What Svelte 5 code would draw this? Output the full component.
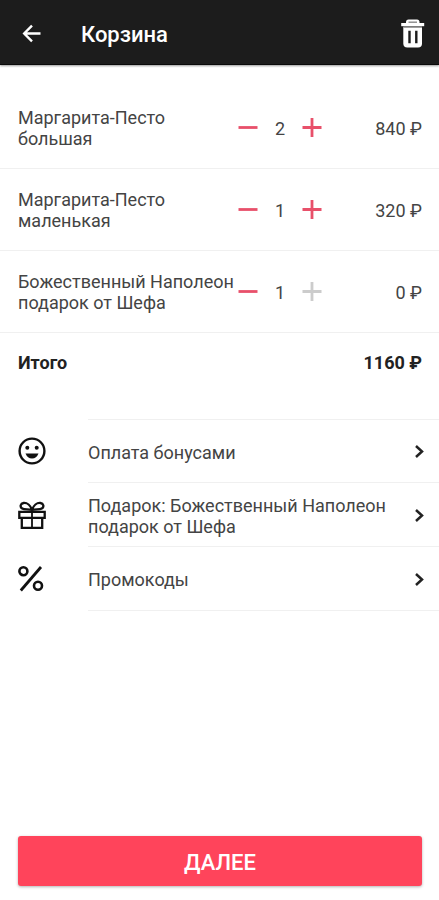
<script lang="ts">
  interface CartItem {
    name: string;
    count: number;
    price: number;
    gift: boolean;
  }

  interface Option {
    icon: string;
    label: string;
  }

  let items: CartItem[] = [
    { name: 'Маргарита-Песто большая', count: 2, price: 420, gift: false },
    { name: 'Маргарита-Песто маленькая', count: 1, price: 320, gift: false },
    {
      name: 'Божественный Наполеон подарок от Шефа',
      count: 1,
      price: 0,
      gift: true,
    },
  ];

  const options: Option[] = [
    { icon: 'smile', label: 'Оплата бонусами' },
    { icon: 'gift', label: 'Подарок: Божественный Наполеон подарок от Шефа' },
    { icon: 'percent', label: 'Промокоды' },
  ];

  $: total = items.reduce((sum, item) => sum + item.count * item.price, 0);

  const changeCount = (i: number, delta: number) => {
    items[i].count += delta;
    items = items.filter((item) => item.count > 0);
  };

  const clearCart = () => {
    items = [];
  };
</script>

<div class="screen">
  <header>
    <button aria-label="Назад">
      <svg width="28" height="28" viewBox="0 0 28 28">
        <path
          d="M22.5 13.5H6.5M14 5.7L6.2 13.5l7.8 7.8"
          fill="none"
          stroke="#fff"
          stroke-width="2.4"
        />
      </svg>
    </button>
    <h1>Корзина</h1>
    <button aria-label="Очистить корзину" on:click={clearCart}>
      <svg width="28" height="32" viewBox="0 0 28 32">
        <path d="M4.3 9H23V25.5Q23 29.5 19 29.5H8.3Q4.300 29.5 4.3 25.5Z" fill="#fff" />
        <path d="M7 5V4Q7 1.500 9.5 1.5H18Q20.500 1.5 20.5 4V5Z" fill="#fff" />
        <path d="M9.500 4.2H18" stroke="#888" stroke-width="1.4" />
        <path d="M2.2 5H25.200V8.2H2.2Z" fill="#fff" />
        <path d="M4.3 9H23" stroke="#888" stroke-width="1.6" />
        <path
          d="M10.5 12.800V25.2M17.3 12.8V25.2"
          stroke="#1c1c1c"
          stroke-width="2.4"
        />
      </svg>
    </button>
  </header>

  <main>
    <ul class="items">
      {#each items as item, i}
        <li class="item">
          <span class="name">{item.name}</span>
          <div class="stepper">
            <button aria-label="Меньше" on:click={() => changeCount(i, -1)}>
              <svg width="20" height="20" viewBox="0 0 20 20">
                <path d="M.5 9.5H19.5" stroke="currentColor" stroke-width="2.8" />
              </svg>
            </button>
            <span>{item.count}</span>
            <button
              aria-label="Больше"
              disabled={item.gift}
              on:click={() => changeCount(i, 1)}
            >
              <svg width="20" height="20" viewBox="0 0 20 20">
                <path
                  d="M.5 9.5H19.5M10 0V19"
                  stroke="currentColor"
                  stroke-width="2.8"
                />
              </svg>
            </button>
          </div>
          <span class="price">{item.count * item.price} ₽</span>
        </li>
      {/each}
    </ul>

    <div class="total">
      <span>Итого</span>
      <span>{total} ₽</span>
    </div>

    <nav class="options">
      {#each options as option}
        <button class="option">
          <svg width="28" height="28" viewBox="0 0 28 28" fill="none" stroke="#111">
            {#if option.icon === 'smile'}
              <circle cx="14" cy="14" r="12.4" stroke-width="2.4" />
              <circle cx="9.3" cy="10.7" r="2" fill="#111" stroke="none" />
              <circle cx="18.7" cy="10.7" r="2" fill="#111" stroke="none" />
              <path
                d="M7.5 16.5H20.5Q18.5 21.5 14 21.5T7.5 16.5Z"
                fill="#111"
                stroke="none"
              />
            {:else if option.icon === 'gift'}
              <path
                d="M1.3 10.8H26.7V16.8H1.3ZM3.8 16.8V26.8H24.2V16.8"
                stroke-width="2.3"
              />
              <path d="M14 10.8V26.8" stroke-width="1.8" />
              <path
                d="M14 9C12.500 4.500 9 1.6 5.6 2C2.400 2.4 1.6 6 4.200 7.600C6.500 9 10 8 14 9C18 8 21.500 9 23.800 7.600C26.400 6 25.600 2.4 22.4 2C19 1.6 15.500 4.5 14 9Z"
                stroke-width="2.3"
              />
            {:else}
              <circle cx="5.4" cy="6.2" r="4" stroke-width="2.6" />
              <circle cx="20" cy="20.8" r="4" stroke-width="2.6" />
              <path d="M23 2L2.800 25.5" stroke-width="2.8" />
            {/if}
          </svg>
          <span class="option-body">
            <span class="label">{option.label}</span>
            <svg width="10" height="14" viewBox="0 0 10 14">
              <path
                d="M2 1L8 6.5L2 12"
                fill="none"
                stroke="#222"
                stroke-width="2.5"
              />
            </svg>
          </span>
        </button>
      {/each}
    </nav>
  </main>

  <footer>
    <button class="next-button">ДАЛЕЕ</button>
  </footer>
</div>

<style>
  :global(body) {
    margin: 0;
    background-color: #fff;
    color: #444;
    font-family: Roboto, 'Noto Sans', sans-serif;
    font-size: 18px;
    line-height: 21px;
  }

  button {
    padding: 0;
    border: none;
    background: none;
    color: inherit;
    font: inherit;
    cursor: pointer;
  }

  svg {
    display: block;
    flex: none;
  }

  .screen {
    display: flex;
    flex-direction: column;
    min-height: 100vh;
  }

  header {
    display: flex;
    align-items: center;
    box-sizing: border-box;
    height: 65px;
    padding: 4px 12px 0 18px;
    background-color: #1c1c1c;
    border-bottom: 1px solid #0a0a0a;
    box-shadow: 0 1px 2px rgba(0, 0, 0, 0.4);
    color: #fff;
  }

  h1 {
    flex: 1;
    margin: 0 0 0 35px;
    padding-top: 2px;
    font-size: 22px;
    line-height: 26px;
    font-weight: 500;
  }

  main {
    flex: 1;
    padding-top: 22px;
  }

  .items {
    margin: 0;
    padding: 0;
    list-style: none;
  }

  .item {
    display: grid;
    grid-template-columns: 1fr 84px 100px;
    align-items: center;
    box-sizing: border-box;
    min-height: 82px;
    padding: 1px 17px 0 18px;
    border-bottom: 1px solid #f0f0f0;
  }

  .name {
    padding-right: 4px;
  }

  .stepper {
    display: flex;
    align-items: center;
    justify-content: space-between;
  }

  .stepper button {
    color: #e8506a;
  }

  .stepper button:disabled {
    color: #ccc;
    cursor: default;
  }

  .price {
    text-align: right;
  }

  .total {
    display: flex;
    justify-content: space-between;
    padding: 19px 17px 21px 18px;
    color: #222;
    font-weight: 700;
  }

  .options {
    margin-top: 25px;
  }

  .option {
    display: flex;
    align-items: center;
    width: 100%;
    padding-left: 18px;
    text-align: left;
  }

  .option-body {
    display: flex;
    flex: 1;
    align-items: center;
    justify-content: space-between;
    box-sizing: border-box;
    min-height: 64px;
    margin-left: 42px;
    padding: 2px 15px 0 0;
    border-bottom: 1px solid #f0f0f0;
  }

  .option:first-child .option-body {
    border-top: 1px solid #f0f0f0;
  }

  .label {
    max-width: 310px;
  }

  footer {
    padding: 14px 17px 14px 18px;
  }

  .next-button {
    width: 100%;
    height: 50px;
    padding-top: 2px;
    border-radius: 3px;
    background-color: #ff445b;
    box-shadow: 0 1px 3px rgba(0, 0, 0, 0.3);
    color: #fff;
    font-size: 22px;
    font-weight: 500;
  }
</style>
